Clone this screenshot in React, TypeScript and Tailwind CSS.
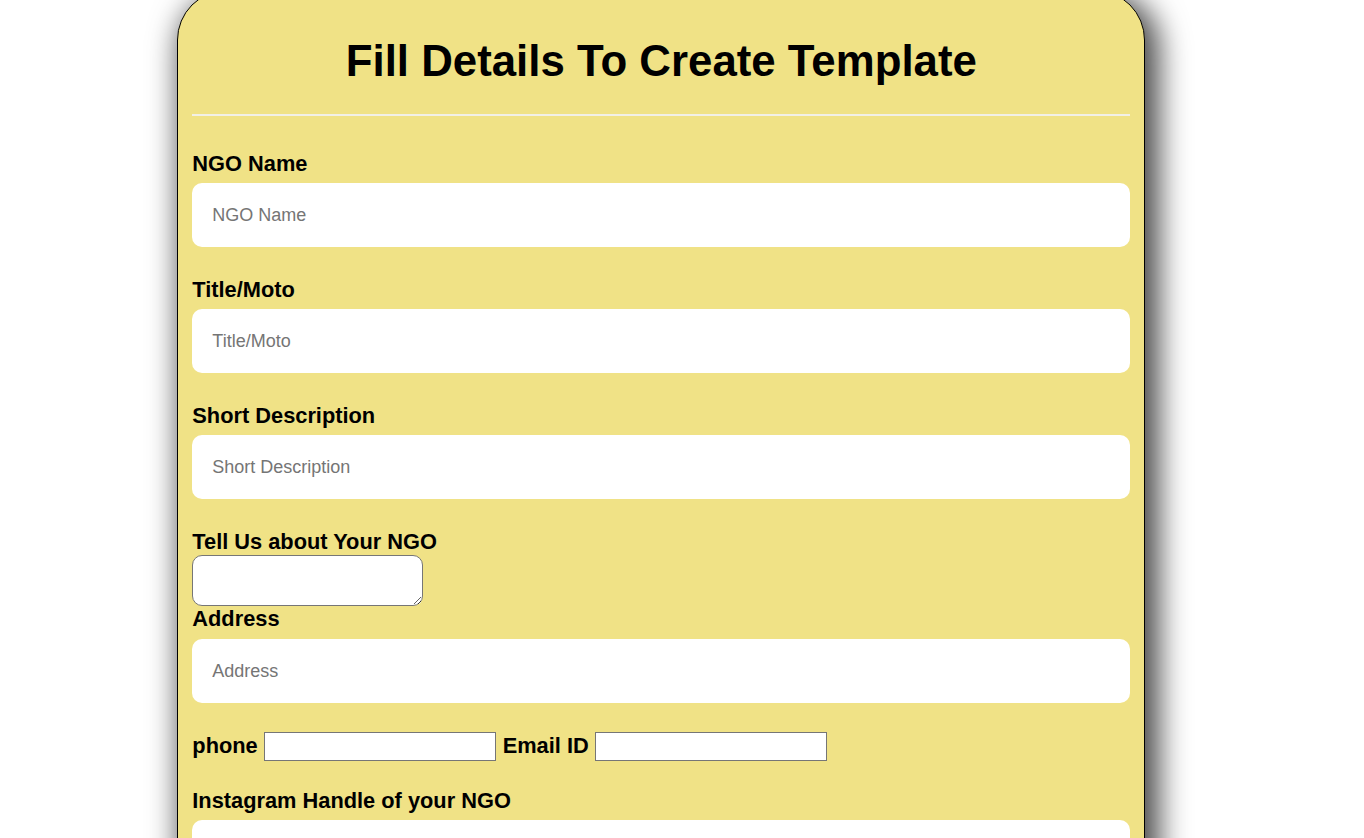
const font = "font-['Liberation_Sans',Arial,sans-serif]"

const Field = ({ label, gap = 'mb-[30px]', top = 'mt-[7px]' }: { label: string; gap?: string; top?: string }) => (
  <div className={gap}>
    <label className="block text-[21.8px] font-bold leading-[25px]">{label}</label>
    <input
      type="text"
      placeholder={label}
      className={`${top} block h-[64px] w-full rounded-[10px] bg-white px-5 text-[18px] text-black outline-none placeholder:text-[#757575]`}
    />
  </div>
)

const App = () => {
  return (
    <div className={`min-h-screen bg-white ${font} text-black`}>
      <div className="-mt-[10px] ml-[13%] w-[968px] rounded-[50px] border border-black bg-[#f0e286] px-[14px] pt-[16px] pb-10 shadow-[8px_8px_30px_6px_#4a4a4a]">
        <h1 className="my-[29px] text-center text-[43.8px] font-bold leading-[49px]">
          Fill Details To Create Template
        </h1>
        <hr className="border-0 border-t-2 border-[#f2f0e6]" />

        <form className="mt-[35px]" onSubmit={(e) => e.preventDefault()}>
          <Field label="NGO Name" />
          <Field label="Title/Moto" />
          <Field label="Short Description" />

          <label className="block text-[21.8px] font-bold leading-[25px]">Tell Us about Your NGO</label>
          <textarea className="mt-[1px] block h-[51px] w-[231px] rounded-[10px] border border-[#767676] bg-white" />

          <Field label="Address" gap="mb-[27px]" top="mt-[8px]" />

          <div className="mb-[25px] flex items-center gap-[6px] text-[21.8px] font-bold">
            <span>phone</span>
            <input type="text" className="h-[29px] w-[232px] border border-[#767676] bg-white" />
            <span className="ml-[1px]">Email ID</span>
            <input type="text" className="h-[29px] w-[232px] border border-[#767676] bg-white" />
          </div>

          <Field label="Instagram Handle of your NGO" />
          <Field label="Facebook Page of your NGO" />
        </form>
      </div>
    </div>
  )
}

export default App
